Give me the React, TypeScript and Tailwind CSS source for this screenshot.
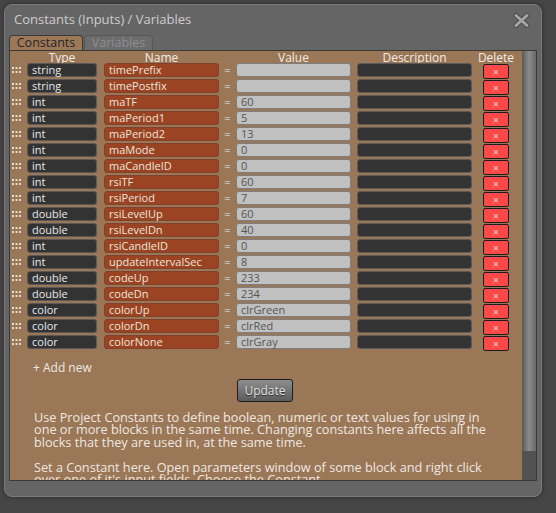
const rows: [string, string, string][] = [
  ["string", "timePrefix", ""],
  ["string", "timePostfix", ""],
  ["int", "maTF", "60"],
  ["int", "maPeriod1", "5"],
  ["int", "maPeriod2", "13"],
  ["int", "maMode", "0"],
  ["int", "maCandleID", "0"],
  ["int", "rsiTF", "60"],
  ["int", "rsiPeriod", "7"],
  ["double", "rsiLevelUp", "60"],
  ["double", "rsiLevelDn", "40"],
  ["int", "rsiCandleID", "0"],
  ["int", "updateIntervalSec", "8"],
  ["double", "codeUp", "233"],
  ["double", "codeDn", "234"],
  ["color", "colorUp", "clrGreen"],
  ["color", "colorDn", "clrRed"],
  ["color", "colorNone", "clrGray"],
];

function CloseIcon() {
  return (
    <svg width="17" height="15" viewBox="0 0 17 15">
      <path d="M3 2.5l11 10M14 2.5l-11 10" stroke="#4c4c4c" strokeWidth="5" strokeLinecap="round" />
      <path d="M3 2.5l11 10M14 2.5l-11 10" stroke="#a6a6a6" strokeWidth="3" strokeLinecap="round" />
    </svg>
  );
}

// drag handle, 3x2 dots
function Grip() {
  return (
    <svg width="10" height="6" viewBox="0 0 10 6" fill="#e2dcd4">
      <rect x="0" y="0" width="2" height="2" />
      <rect x="3.5" y="0" width="2" height="2" />
      <rect x="7" y="0" width="2" height="2" />
      <rect x="0" y="4" width="2" height="2" />
      <rect x="3.5" y="4" width="2" height="2" />
      <rect x="7" y="4" width="2" height="2" />
    </svg>
  );
}

function Row({ type, name, value }: { type: string; name: string; value: string }) {
  return (
    <div className="flex h-[16px] items-start">
      <div className="ml-[2px] w-[10px] h-[14px] flex items-center">
        <Grip />
      </div>
      <div className="ml-[5px] w-[70px] h-[14px] flex items-center pl-[4px] rounded-[3px] border border-[#585858] bg-[#333333] text-[11px] text-[#e8e8e8]">
        {type}
      </div>
      <div className="ml-[7px] w-[115px] h-[14px] flex items-center pl-[4px] rounded-[3px] border border-[#84402a] bg-[#9a4424] text-[11px] text-[#eee4dc]">
        {name}
      </div>
      <div className="w-[17px] h-[14px] flex items-center justify-center text-[11px] text-[#eeeeee]">=</div>
      <div className="w-[115px] h-[14px] flex items-center pl-[4px] rounded-[3px] border border-[#7e7e7e] bg-[#c0c0c0] text-[11px] text-[#555555]">
        {value}
      </div>
      <div className="ml-[6px] w-[115px] h-[14px] rounded-[3px] border border-[#5a5a5a] bg-[#333333]" />
      <div className="ml-[11px] mt-[1px] w-[26px] h-[15px] flex items-center justify-center rounded-[2px] border border-[#1c1c1c] bg-[#ff4848] text-[11px] leading-none text-[#f8d0d0]">
        ×
      </div>
    </div>
  );
}

export default function App() {
  return (
    <div className="w-[556px] h-[513px] overflow-hidden bg-[#464646] pl-[4px] pt-[4px] font-['Open_Sans',sans-serif]">
      <div className="w-[538px] h-[493px] flex flex-col rounded-[8px] border border-[#7a7a7a] bg-[#656565] px-[4px] shadow-[0_0_4px_#2a2a2a]">
        <div className="h-[30px] shrink-0 flex items-center justify-between pl-[5px] pr-[7px]">
          <span className="text-[13px] text-[#cdcdcd]">Constants (Inputs) / Variables</span>
          <CloseIcon />
        </div>

        <div className="flex h-[15px] shrink-0 items-end">
          <div className="w-[74px] h-[15px] flex items-center justify-center rounded-t-[4px] border border-b-0 border-[#3a3a3a] bg-[#9c7858] text-[12.5px] text-[#262626]">
            Constants
          </div>
          <div className="ml-[1px] w-[69px] h-[15px] flex items-center justify-center rounded-t-[4px] border border-b-0 border-[#575757] bg-[#6c6c6c] text-[12.5px] text-[#8e8e8e]">
            Variables
          </div>
        </div>

        <div className="flex h-[431px] shrink-0 overflow-hidden border border-[#3a3a3a] bg-[#9a7757]">
          <div className="flex-1 overflow-hidden">
            <div className="flex h-[12px] items-center text-[12px] leading-[13px] text-[#f4ece4]">
              <div className="ml-[17px] w-[70px] text-center">Type</div>
              <div className="ml-[7px] w-[115px] text-center">Name</div>
              <div className="ml-[17px] w-[115px] text-center">Value</div>
              <div className="ml-[6px] w-[115px] text-center">Description</div>
              <div className="ml-[5px] w-[38px] text-center">Delete</div>
            </div>

            {rows.map(([t, n, v]) => (
              <Row key={n} type={t} name={n} value={v} />
            ))}

            <div className="mt-[10px] ml-[23px] h-[14px] text-[12px] leading-[14px] text-[#f0e8e0]">+ Add new</div>

            <div className="mt-[4px] ml-[227px] w-[56px] h-[23px] flex items-center justify-center rounded-[3px] border border-[#1e1e1e] bg-gradient-to-b from-[#8e8e8e] to-[#5c5c5c] text-[12px] text-[#e2e2e2] [text-shadow:0_1px_1px_#2a2a2a]">
              Update
            </div>

            <div className="mt-[9px] ml-[24px] text-[12.7px] leading-[12.4px] text-[#f0e8e0] whitespace-nowrap">
              <p>Use Project Constants to define boolean, numeric or text values for using in</p>
              <p>one or more blocks in the same time. Changing constants here affects all the</p>
              <p>blocks that they are used in, at the same time.</p>
              <p>&nbsp;</p>
              <p>Set a Constant here. Open parameters window of some block and right click</p>
              <p>over one of it's input fields. Choose the Constant.</p>
            </div>
          </div>

          <div className="w-[14px] flex flex-col">
            <div className="h-[400px] shrink-0 bg-gradient-to-r from-[#5a5a5a] via-[#8c8c8c] to-[#686868]" />
            <div className="flex-1 bg-[#525252]" />
          </div>
        </div>
      </div>
    </div>
  );
}
